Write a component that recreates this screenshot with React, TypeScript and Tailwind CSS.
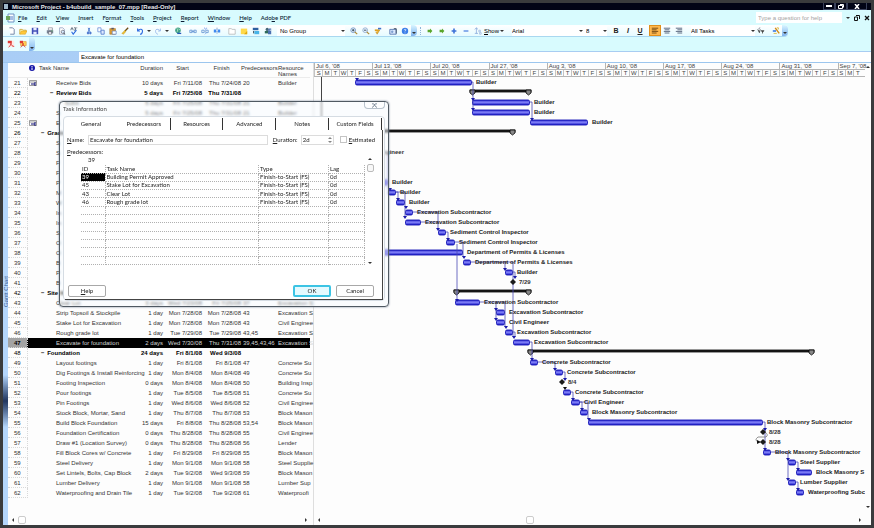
import React from 'react';
import clsx from 'clsx';

type Task = {
  id: number;
  name: string;
  dur?: string;
  start?: string;
  finish?: string;
  pred?: string;
  res?: string;
  summary?: boolean;
  flag?: boolean;
};

const TASKS: Task[] = [
  { id: 21, name: 'Receive Bids', dur: '10 days', start: 'Fri 7/11/08', finish: 'Thu 7/24/08', pred: '20', res: 'Builder', flag: true },
  { id: 22, name: 'Review Bids', dur: '5 days', start: 'Fri 7/25/08', finish: 'Thu 7/31/08', summary: true },
  { id: 23, name: 'Subs', dur: '5 days', start: 'Fri 7/25/08', finish: 'Thu 7/31/08', pred: '21', res: 'Builder' },
  { id: 24, name: 'S', dur: '5 days', start: 'Fri 7/25/08', finish: 'Thu 7/31/08', pred: '21', res: 'Builder' },
  { id: 25, name: 'E', flag: true },
  { id: 26, name: 'Grading', summary: true },
  { id: 27, name: 'S' },
  { id: 28, name: 'S' },
  { id: 29, name: 'F' },
  { id: 30, name: 'F' },
  { id: 31, name: 'P' },
  { id: 32, name: 'M' },
  { id: 33, name: 'W' },
  { id: 34, name: 'In' },
  { id: 35, name: 'In' },
  { id: 36, name: 'S' },
  { id: 37, name: 'O' },
  { id: 38, name: 'O' },
  { id: 39, name: 'B' },
  { id: 40, name: 'P' },
  { id: 41, name: 'B' },
  { id: 42, name: 'Site Work', summary: true },
  { id: 43, name: 'Clear Lot', dur: '3 days', start: 'Wed 7/23/08', finish: 'Fri 7/25/08', pred: '37', res: 'Excavation S' },
  { id: 44, name: 'Strip Topsoil & Stockpile', dur: '1 day', start: 'Mon 7/28/08', finish: 'Mon 7/28/08', pred: '43', res: 'Excavation S' },
  { id: 45, name: 'Stake Lot for Excavation', dur: '1 day', start: 'Mon 7/28/08', finish: 'Mon 7/28/08', pred: '43', res: 'Civil Enginee' },
  { id: 46, name: 'Rough grade lot', dur: '1 day', start: 'Tue 7/29/08', finish: 'Tue 7/29/08', pred: '43,45', res: 'Excavation S' },
  { id: 47, name: 'Excavate for foundation', dur: '2 days', start: 'Wed 7/30/08', finish: 'Thu 7/31/08', pred: '39,45,43,46', res: 'Excavation S' },
  { id: 48, name: 'Foundation', dur: '24 days', start: 'Fri 8/1/08', finish: 'Wed 9/3/08', summary: true },
  { id: 49, name: 'Layout footings', dur: '1 day', start: 'Fri 8/1/08', finish: 'Fri 8/1/08', pred: '47', res: 'Concrete Su' },
  { id: 50, name: 'Dig Footings & Install Reinforcing', dur: '1 day', start: 'Mon 8/4/08', finish: 'Mon 8/4/08', pred: '49', res: 'Concrete Su' },
  { id: 51, name: 'Footing Inspection', dur: '0 days', start: 'Mon 8/4/08', finish: 'Mon 8/4/08', pred: '50', res: 'Building Insp' },
  { id: 52, name: 'Pour footings', dur: '1 day', start: 'Tue 8/5/08', finish: 'Tue 8/5/08', pred: '51', res: 'Concrete Su' },
  { id: 53, name: 'Pin Footings', dur: '1 day', start: 'Wed 8/6/08', finish: 'Wed 8/6/08', pred: '52', res: 'Civil Enginee' },
  { id: 54, name: 'Stock Block, Mortar, Sand', dur: '1 day', start: 'Thu 8/7/08', finish: 'Thu 8/7/08', pred: '53', res: 'Block Mason' },
  { id: 55, name: 'Build Block Foundation', dur: '15 days', start: 'Fri 8/8/08', finish: 'Thu 8/28/08', pred: '53,54', res: 'Block Mason' },
  { id: 56, name: 'Foundation Certification', dur: '0 days', start: 'Thu 8/28/08', finish: 'Thu 8/28/08', pred: '55', res: 'Civil Enginee' },
  { id: 57, name: 'Draw #1 (Location Survey)', dur: '0 days', start: 'Thu 8/28/08', finish: 'Thu 8/28/08', pred: '56', res: 'Lender' },
  { id: 58, name: 'Fill Block Cores w/ Concrete', dur: '1 day', start: 'Fri 8/29/08', finish: 'Fri 8/29/08', pred: '55', res: 'Block Mason' },
  { id: 59, name: 'Steel Delivery', dur: '1 day', start: 'Mon 9/1/08', finish: 'Mon 9/1/08', pred: '58', res: 'Steel Supplie' },
  { id: 60, name: 'Set Lintels, Bolts, Cap Block', dur: '2 days', start: 'Tue 9/2/08', finish: 'Wed 9/3/08', pred: '59', res: 'Block Mason' },
  { id: 61, name: 'Lumber Delivery', dur: '1 day', start: 'Mon 9/1/08', finish: 'Mon 9/1/08', pred: '58', res: 'Lumber Sup' },
  { id: 62, name: 'Waterproofing and Drain Tile', dur: '1 day', start: 'Tue 9/2/08', finish: 'Tue 9/2/08', pred: '61', res: 'Waterproofi' },
];

// [task id, bar start, bar end, resource label]
const BARS: [number, number, number, string][] = [
  [21, 41, 158, 'Builder'],
  [23, 158, 216, 'Builder'],
  [24, 158, 216, 'Builder'],
  [25, 216, 274, 'Builder'],
  [31, 30, 74, 'Builder'],
  [32, 74, 82, 'Builder'],
  [33, 82, 91, 'Builder'],
  [34, 91, 99, 'Excavation Subcontractor'],
  [35, 91, 107, 'Excavation Subcontractor'],
  [36, 124, 132, 'Sediment Control Inspector'],
  [37, 132, 141, 'Sediment Control Inspector'],
  [38, 40, 149, 'Department of Permits & Licenses'],
  [39, 149, 157, 'Department of Permits & Licenses'],
  [40, 191, 199, 'Builder'],
  [43, 141, 166, 'Excavation Subcontractor'],
  [44, 182, 191, 'Excavation Subcontractor'],
  [45, 182, 191, 'Civil Engineer'],
  [46, 191, 199, 'Excavation Subcontractor'],
  [47, 199, 216, 'Excavation Subcontractor'],
  [49, 216, 224, 'Concrete Subcontractor'],
  [50, 241, 249, 'Concrete Subcontractor'],
  [52, 249, 257, 'Concrete Subcontractor'],
  [53, 257, 266, 'Civil Engineer'],
  [54, 266, 274, 'Block Masonry Subcontractor'],
  [55, 274, 449, 'Block Masonry Subcontractor'],
  [58, 449, 457, 'Block Masonry Subcontractor'],
  [59, 474, 482, 'Steel Supplier'],
  [60, 482, 498, 'Block Masonry S'],
  [61, 474, 482, 'Lumber Supplier'],
  [62, 482, 490, 'Waterproofing Subc'],
];

const SUMMARIES: [number, number, number][] = [
  [22, 156, 217],
  [26, 10, 201],
  [42, 140, 217],
  [48, 214, 500],
];

const MILESTONES: [number, number, string][] = [
  [41, 199, '7/29'],
  [51, 248, '8/4'],
  [56, 449, '8/28'],
  [57, 449, '8/28'],
];

// dependency lines, y measured from the top of the first row
const LINKS = [
  'M158 5H159V32', 'M216 25H218V42', 'M74 75V112', 'M82 115H84V122',
  'M82 115H91V140', 'M99 135H124V152', 'M107 145H124', 'M132 155H134V162',
  'M143 167V222', 'M141 165H149V180', 'M157 185H191V192', 'M191 185H199V260',
  'M199 195H201V200', 'M166 225H182V242', 'M182 225H191V250', 'M199 255H201V260',
  'M216 265H218V282', 'M224 285H241V292', 'M249 295H251V302', 'M257 315H259V322',
  'M266 325H268V332', 'M266 325H274V342', 'M449 345H451V372', 'M457 375H474V402',
  'M482 385H484V392', 'M482 405H484V412',
];

const ARROWS: [number, number][] = [
  [43, 2], [159, 22], [159, 32], [218, 42], [76, 112], [84, 122], [92, 130], [91, 140],
  [124, 152], [134, 162], [150, 180], [191, 192], [201, 200], [143, 223], [182, 232],
  [182, 242], [192, 250], [200, 260], [218, 282], [241, 292], [251, 302], [259, 322],
  [268, 332], [275, 342], [451, 352], [451, 372], [474, 382], [484, 392], [474, 402], [484, 412],
];

const WEEKS = ["Jul 6, '08", "Jul 13, '08", "Jul 20, '08", "Jul 27, '08", "Aug 3, '08", "Aug 10, '08", "Aug 17, '08", "Aug 24, '08", "Aug 31, '08", "Sep 7, '08"];
const DAYS = ['S', 'M', 'T', 'W', 'T', 'F', 'S'];
const DAYS_SHOWN = 66.3;

const rowTop = (id: number) => (id - 21) * 10;

const PREDECESSORS = [
  ['39', 'Building Permit Approved'],
  ['45', 'Stake Lot for Excavation'],
  ['43', 'Clear Lot'],
  ['46', 'Rough grade lot'],
];

const ICONS: Record<string, React.ReactNode> = {
  New: <path d="M3 1h4l2 2v6H4" fill="#fff" stroke="#5a6e96" />,
  Open: (
    <>
      <path d="M1 9V3h3l1 1h4v2" fill="#fff3b0" stroke="#c9a227" />
      <path d="M1 9l2-4h7L8 9z" fill="#ffc93c" stroke="#d99a10" strokeWidth=".6" />
    </>
  ),
  Save: (
    <>
      <path d="M1 1h8v8H1z" fill="#4350b8" />
      <path d="M3 1h4v3H3zM3 6h4v3H3z" fill="#e8edff" />
    </>
  ),
  Print: (
    <>
      <path d="M3 1h5v3H3z" fill="#fff" stroke="#667" strokeWidth=".7" />
      <path d="M1 4h8v4H1z" fill="#7b8797" />
      <path d="M3 6h4v3H3z" fill="#fff" stroke="#445" strokeWidth=".7" />
      <path d="M7 5h1" stroke="#3c3" />
    </>
  ),
  'Print Preview': (
    <>
      <path d="M2 1h4l2 2v6H2z" fill="#fff" stroke="#7a8bb0" strokeWidth=".8" />
      <circle cx="6" cy="6" r="2" fill="#d8ecff" stroke="#445" strokeWidth=".7" />
      <path d="M7 8l2 1" stroke="#333" />
    </>
  ),
  Spelling: (
    <>
      <path d="M1 4l1-3h1l1 3M5 1h2v3H5M8 1h1" fill="none" stroke="#345" strokeWidth=".9" />
      <path d="M2 6l2 3 4-5" fill="none" stroke="#2b6be0" strokeWidth="1.4" />
    </>
  ),
  Cut: (
    <>
      <path d="M4 1l2 5M6 1L4 6" stroke="#3469c8" />
      <path d="M3 6.500h1.500v2H3zM6 6.500h1.500v2H6z" fill="none" stroke="#1c4fc0" />
    </>
  ),
  Copy: (
    <>
      <path d="M1 1h4v5H1z" fill="#fff" stroke="#6c8fd8" />
      <path d="M5 4h4v5H5z" fill="#dfeaff" stroke="#4d77c9" />
    </>
  ),
  Paste: (
    <>
      <path d="M1 2h7v7H1z" fill="#e0a038" stroke="#a5701c" strokeWidth=".7" />
      <path d="M3 1h3v2H3z" fill="#556" />
      <path d="M4 5h5v4H4z" fill="#fff" stroke="#3b64b8" strokeWidth=".7" />
    </>
  ),
  'Format Painter': (
    <>
      <path d="M9 1L5 5" stroke="#6b4a12" strokeWidth="1.600" />
      <path d="M5 4l1 2-3 3-2-1z" fill="#f1c232" stroke="#b58a10" strokeWidth=".5" />
    </>
  ),
  Undo: <path d="M2 2v3h3M2 5c2-3 7-3 6 1-.4 2-2 3-3 3" fill="none" stroke="#2d6ae0" strokeWidth="1.400" />,
  Redo: <path d="M8 2v3H5M8 5C6 2 1 2 2 6c.4 2 2 3 3 3" fill="none" stroke="#9ab8ea" strokeWidth="1.100" />,
  'Insert Hyperlink': (
    <>
      <circle cx="5" cy="4" r="3.500" fill="#3f9f8a" />
      <path d="M3 2l2 1-1 3M6 2l2 2" stroke="#c6f3c8" fill="none" />
      <path d="M4 8h5" stroke="#2457b8" strokeWidth="1.600" />
    </>
  ),
  'Link Tasks': <path d="M1 4h3v3H1zM6 4h3v3H6zM3 5.500h4" fill="none" stroke="#5d8fd0" />,
  'Unlink Tasks': (
    <>
      <path d="M1 4h3v3H1zM6 4h3v3H6z" fill="none" stroke="#5d8fd0" />
      <path d="M4 1l2 2M6 8L5 9M7 1v1" stroke="#3d6fe0" />
    </>
  ),
  'Split Task': (
    <>
      <path d="M1 3h3v4H1zM6 3h3v4H6z" fill="#3f8af0" />
      <path d="M5 1v8" stroke="#2a4f9c" strokeDasharray="1 1" />
    </>
  ),
  'Task Information': <path d="M1 2h3l1 1h4v6H1z" fill="#fff" stroke="#a9a9a9" strokeWidth=".8" />,
  'Task Notes': (
    <>
      <path d="M1 2h8v7H1z" fill="#ffd94a" />
      <path d="M5 9l4-4v4z" fill="#e0a80e" />
    </>
  ),
  'Assign Resources': (
    <>
      <path d="M1 1h7v3H1z" fill="#2e5f9f" />
      <path d="M3 5h6v4H3z" fill="#48b4e8" />
      <path d="M2 5v3" stroke="#123" />
    </>
  ),
  Publish: (
    <>
      <circle cx="4" cy="3" r="2" fill="#467" />
      <path d="M1 5h5v3H1z" fill="#2f6b5a" />
      <path d="M6 2h3v7H5V6" fill="#4a6fb0" />
      <path d="M7 4h2" stroke="#fff" />
    </>
  ),
  'Zoom In': (
    <>
      <circle cx="4" cy="4" r="3" fill="#e5f3ff" stroke="#6f90c0" />
      <path d="M2.500 4h3M4 2.500v3" stroke="#234" />
      <path d="M6 6l3 3" stroke="#b08a30" strokeWidth="1.500" />
    </>
  ),
  'Zoom Out': (
    <>
      <circle cx="4" cy="4" r="3" fill="#e5f3ff" stroke="#8fa9cd" />
      <path d="M2.500 4h3" stroke="#234" />
      <path d="M6 6l3 3" stroke="#b08a30" strokeWidth="1.500" />
    </>
  ),
  'Go To Selected Task': (
    <>
      <path d="M1 3h6v2H1z" fill="#e0a020" />
      <path d="M5 1h4v2H5z" fill="#3d72c8" />
      <path d="M7 4L4 9 2 6" fill="#f0b53a" stroke="#a87a12" strokeWidth=".6" />
    </>
  ),
  'Copy Picture': (
    <>
      <path d="M1 3h8v6H1z" fill="#dbe9ff" stroke="#4a6ba8" />
      <path d="M6 2h3v6" stroke="#345" fill="none" />
      <circle cx="4" cy="6" r="1.500" fill="#7f9fd0" />
    </>
  ),
  Help: (
    <>
      <circle cx="5" cy="5" r="4" fill="#3a7de8" />
      <path d="M4 4c0-2 3-1 2 0L5 5.500M5 7v1" fill="none" stroke="#fff" />
    </>
  ),
  Outdent: <path d="M2 3.500h3V2l3 3-3 3V6.500H2z" fill="#59a52c" />,
  Indent: <path d="M2 3.500h3V2l3 3-3 3V6.500H2z" fill="#59a52c" />,
  'Show Subtasks': <path d="M4 2h2v2h2v2H6v2H4V6H2V4h2z" fill="#3d72d8" />,
  'Hide Subtasks': <path d="M2 4h6v2H2z" fill="#6f9be8" />,
  Outline: (
    <>
      <path d="M3 1v7M1 3l2-2 2 2M1 8h4" fill="none" stroke="#7fa3d8" strokeWidth=".9" />
      <path d="M6 4h2v2H6zM7 7h2v2H7z" fill="#fff" stroke="#7fa3d8" strokeWidth=".7" />
    </>
  ),
  'Align Left': <path d="M1 1.500h8M1 3.500h6M1 5.500h8M1 7.500h6" stroke="#5c3608" />,
  Center: <path d="M1 1.500h8M2 3.500h6M1 5.500h8M2 7.500h6" stroke="#3b4a66" />,
  'Align Right': <path d="M1 1.500h8M3 3.500h6M1 5.500h8M3 7.500h6" stroke="#3b4a66" />,
  AutoFilter: (
    <>
      <path d="M1 3l2 4 1-4" fill="none" stroke="#222" />
      <path d="M5 4h4v1L7.500 6.500V8H6.500V6.500L5 5z" fill="#444" />
      <path d="M2 2l2-1" stroke="#667" />
    </>
  ),
  'Gantt Wizard': (
    <>
      <path d="M1 4h4v2H1z" fill="#3a78e0" />
      <path d="M4 1l5 7" stroke="#d28b16" strokeWidth="1.800" />
      <path d="M6 1h2v2M2 8h4" stroke="#e0b020" fill="none" />
    </>
  ),
  'Convert to PDF': (
    <>
      <path d="M1 1h8v8H1z" fill="#ffe9e6" />
      <path d="M1 1h5v3H1z" fill="#e03a34" />
      <path d="M2 9c2-1 3-4 3-5 0 3 2 4 4 4" fill="none" stroke="#d11f1f" />
    </>
  ),
  'Convert to PDF and Email': (
    <>
      <path d="M2 2h7v5H2z" fill="#ffd35a" stroke="#e08a1a" strokeWidth=".7" />
      <path d="M1 1h4v3H1z" fill="#e03a34" />
      <path d="M2 9c2-1 3-3 3-5 0 3 2 4 3 5" fill="none" stroke="#d11f1f" />
    </>
  ),
};

function Caret({ dir = 'down' }: { dir?: 'up' | 'down' | 'left' | 'right' }) {
  const shape = { down: '0,1 4,1 2,3', up: '0,3 4,3 2,1', left: '3,0 3,4 1,2', right: '1,0 1,4 3,2' }[dir];
  return (
    <svg viewBox="0 0 4 4" className="pointer-events-none size-1 shrink-0 fill-[#333]">
      <polygon points={shape} />
    </svg>
  );
}

function IconButton({ name, active }: { name: string; active?: boolean }) {
  return (
    <button
      type="button"
      aria-label={name}
      className={clsx('flex h-[11px] w-3 shrink-0 items-center justify-center', active && 'border border-[#e0901c] bg-[#ffb84d]')}
    >
      <svg viewBox="0 0 10 10" className="size-2">{ICONS[name]}</svg>
    </button>
  );
}

function IconGroup({ names }: { names: string[] }) {
  return (
    <div className="flex shrink-0">
      {names.map((n) => <IconButton key={n} name={n} />)}
    </div>
  );
}

function Combo({ label, value, className }: { label: string; value: string; className: string }) {
  return (
    <div className={clsx('flex h-[10px] shrink-0 items-center bg-white', className)}>
      <select aria-label={label} defaultValue={value} className="h-full min-w-0 flex-1 appearance-none bg-transparent text-[6px] leading-none outline-none">
        <option>{value}</option>
      </select>
      <Caret />
    </div>
  );
}

function ToolbarEnd() {
  return (
    <button type="button" aria-label="Toolbar options" className="flex h-full w-[6px] shrink-0 items-end justify-center rounded-r bg-linear-to-b from-[#d9f6ff] to-[#7fb2ee] pb-px">
      <Caret />
    </button>
  );
}

function TitleBar() {
  return (
    <header className="flex h-[7px] items-center justify-between overflow-hidden bg-[#020416] pr-1 text-[6px] leading-none font-bold text-[#e8e8e8]">
      <div className="flex items-center gap-1 pl-px">
        <span className="h-[5px] w-1 bg-[#9fb6c9]" />
        <h1>Microsoft Project - b4ubuild_sample_07.mpp [Read-Only]</h1>
      </div>
      <div className="flex">
        <button type="button" aria-label="Minimize" className="flex h-[7px] w-3 items-center justify-center border border-t-0 border-[#39405a]">
          <svg viewBox="0 0 6 4" className="h-1 w-[6px]"><path d="M0 1h6v2H0z" fill="#fff" /></svg>
        </button>
        <button type="button" aria-label="Restore" className="flex h-[7px] w-3 items-center justify-center border border-t-0 border-[#39405a]">
          <svg viewBox="0 0 6 5" className="h-[5px] w-[6px]"><path d="M2 .5h3.500v3M.5 1.500h4v3h-4z" fill="none" stroke="#fff" /></svg>
        </button>
        <button type="button" aria-label="Close" className="flex h-[7px] w-5 items-center justify-center border border-t-0 border-[#39405a]">
          <svg viewBox="0 0 6 5" className="h-[5px] w-[6px]"><path d="M1 0l4 5M5 0L1 5" stroke="#fff" strokeWidth="1.500" /></svg>
        </button>
      </div>
    </header>
  );
}

const MENUS: [string, string, string][] = [
  ['', 'F', 'ile'], ['', 'E', 'dit'], ['', 'V', 'iew'], ['', 'I', 'nsert'], ['F', 'o', 'rmat'], ['', 'T', 'ools'],
  ['', 'P', 'roject'], ['', 'R', 'eport'], ['', 'W', 'indow'], ['', 'H', 'elp'], ['Ado', 'b', 'e PDF'],
];

function MenuBar() {
  return (
    <nav className="flex h-[15px] items-center justify-between bg-[#d8fbfe] pl-[2px] text-[6px] leading-none text-[#0b1c33]">
      <div className="flex items-center gap-[3px]">
        <svg viewBox="0 0 10 10" className="size-[10px]">
          <path d="M3 1h6v8H3z" fill="#fff" stroke="#6d92c4" />
          <path d="M1 3h4v4H1z" fill="#6aa35c" />
          <path d="M5 4h3M5 6h3" stroke="#4c7cc9" />
        </svg>
        <div className="flex gap-[9px] font-['Lato',sans-serif] font-medium">
          {MENUS.map(([a, key, b]) => (
            <button key={key + b} type="button">
              {a}<span className="underline">{key}</span>{b}
            </button>
          ))}
        </div>
      </div>
      <div className="flex items-center gap-1 pr-px">
        <input aria-label="Type a question for help" placeholder="Type a question for help" className="h-[11px] w-[86px] bg-white px-[2px] text-[6px] outline-none placeholder:text-[#a3a3a3]" />
        <Caret />
        <button type="button" aria-label="Restore window">
          <svg viewBox="0 0 6 6" className="size-[6px]"><path d="M2 .5h3.500V4M.5 2h3v3.500h-3z" fill="none" stroke="#111" /></svg>
        </button>
        <button type="button" aria-label="Close window">
          <svg viewBox="0 0 6 6" className="size-[6px]"><path d="M1 1l4 4M5 1L1 5" stroke="#111" strokeWidth="1.300" /></svg>
        </button>
      </div>
    </nav>
  );
}

function Toolbars() {
  return (
    <div className="bg-[#d8fbfe]">
      <div className="flex h-3 w-fit items-center rounded-r border-b border-[#a9d8f0] bg-linear-to-b from-white to-[#e6fbff] pl-[2px]">
        <div className="flex items-center gap-[3px]">
          <IconGroup names={['New', 'Open', 'Save']} />
          <IconGroup names={['Print', 'Print Preview', 'Spelling']} />
          <IconGroup names={['Cut', 'Copy', 'Paste', 'Format Painter']} />
          <div className="flex items-center gap-px">
            <IconButton name="Undo" />
            <Caret />
            <IconButton name="Redo" />
            <Caret />
          </div>
          <IconGroup names={['Insert Hyperlink']} />
          <IconGroup names={['Link Tasks', 'Unlink Tasks', 'Split Task']} />
          <IconGroup names={['Task Information', 'Task Notes', 'Assign Resources', 'Publish']} />
          <Combo label="Group by" value="No Group" className="w-[68px] pl-[3px]" />
          <IconGroup names={['Zoom In', 'Zoom Out', 'Go To Selected Task']} />
          <IconGroup names={['Copy Picture', 'Help']} />
        </div>
        <ToolbarEnd />
        <div className="mx-[3px] h-2 border-l border-dotted border-[#8fb4d6]" />
        <IconGroup names={['Outdent', 'Indent', 'Show Subtasks', 'Hide Subtasks', 'Outline']} />
        <button type="button" className="flex w-[22px] shrink-0 items-center gap-px text-[6px] leading-none">
          <span><span className="underline">S</span>how</span>
          <Caret />
        </button>
        <Combo label="Font" value="Arial" className="ml-[6px] w-[71px]" />
        <Combo label="Font size" value="8" className="w-6 pl-[3px]" />
        <div className="mx-[3px] flex text-[7px] leading-none text-[#222]">
          <button type="button" className="w-3 font-bold">B</button>
          <button type="button" className="w-3 font-bold italic">I</button>
          <button type="button" className="w-3 font-bold underline">U</button>
        </div>
        <IconButton name="Align Left" active />
        <IconGroup names={['Center', 'Align Right']} />
        <Combo label="Filter" value="All Tasks" className="ml-[6px] w-[64px]" />
        <IconButton name="AutoFilter" />
        <div className="ml-[3px] flex h-full items-center">
          <IconButton name="Gantt Wizard" />
          <ToolbarEnd />
        </div>
      </div>
      <div className="flex h-[14px] w-fit items-center rounded-r bg-[#e8fdff] pl-[2px]">
        <IconGroup names={['Convert to PDF', 'Convert to PDF and Email']} />
        <ToolbarEnd />
      </div>
      <div className="h-px bg-[#a8cdf2]" />
    </div>
  );
}

function IndicatorIcon() {
  return (
    <svg viewBox="0 0 8 8" className="ml-px size-2">
      <path d="M.5 1.500h7v5h-7zM.5 3h7" fill="#fff" stroke="#777" strokeWidth=".7" />
      <path d="M2 5h4M6 3v4" stroke="#0a0a70" />
    </svg>
  );
}

function TaskTable() {
  return (
    <table className="w-[302px] table-fixed border-collapse text-[6px] leading-none whitespace-nowrap text-[#333]">
      <colgroup>
        <col className="w-[19px]" /><col className="w-[12px]" /><col className="w-[97px]" /><col className="w-[27px]" />
        <col className="w-[39px]" /><col className="w-[39px]" /><col className="w-[37px]" /><col className="w-[32px]" />
      </colgroup>
      <thead>
        <tr className="h-[14px] border-b border-[#ececec] align-top [&>th]:p-0 [&>th]:pt-[2px] [&>th]:font-normal">
          <th />
          <th>
            <svg viewBox="0 0 6 6" className="ml-[2px] size-[6px]">
              <circle cx="3" cy="3" r="3" fill="#1717a8" />
              <path d="M3 1v1M3 2.500v2.500" stroke="#fff" />
            </svg>
          </th>
          <th className="text-left">Task Name</th>
          <th className="text-right">Duration</th>
          <th>Start</th>
          <th>Finish</th>
          <th className="text-left">Predecessors</th>
          <th className="text-left">Resource<br />Names</th>
        </tr>
      </thead>
      <tbody>
        {TASKS.map((t) => (
          <tr
            key={t.id}
            className={clsx(
              'h-[10px] [&>td]:p-0',
              t.summary && 'font-bold text-black',
              t.id === 47 && 'bg-black text-[#d5d5d5]'
            )}
          >
            <th
              scope="row"
              className={clsx('border-r border-b border-dotted border-[#d8d8d8] p-0', t.id === 47 ? 'bg-[#a3a3a3] font-bold text-black' : 'font-normal')}
            >
              {t.id}
            </th>
            <td>{t.flag && <IndicatorIcon />}</td>
            <td>
              {t.summary ? (
                <span className={t.id === 22 ? 'pl-[11px]' : 'pl-[2px]'}>− <span className="pl-px">{t.name}</span></span>
              ) : (
                <span className={t.id === 23 ? 'pl-[26px]' : 'pl-[17px]'}>{t.name}</span>
              )}
            </td>
            <td className="text-right">{t.dur}</td>
            <td className="text-right">{t.start}</td>
            <td className="text-right">{t.finish}</td>
            <td><span className="pl-[2px]">{t.pred}</span></td>
            <td>{t.res}</td>
          </tr>
        ))}
      </tbody>
    </table>
  );
}

function Timescale() {
  const dayWidth = `${100 / DAYS_SHOWN}%`;
  const weekWidth = `${700 / DAYS_SHOWN}%`;
  return (
    <div className="h-[14px] text-[6px] leading-none text-[#444]">
      <div className="flex h-[7px] border-b border-[#b5b5b5]">
        {WEEKS.map((w, i) => (
          <div
            key={w}
            className={clsx('border-l border-[#b5b5b5] pl-px whitespace-nowrap', i === WEEKS.length - 1 ? 'min-w-0 flex-1' : 'shrink-0')}
            style={i === WEEKS.length - 1 ? undefined : { width: weekWidth }}
          >
            {w}
          </div>
        ))}
      </div>
      <div className="flex h-[7px] overflow-hidden border-b border-[#b5b5b5]">
        {WEEKS.flatMap((w) => DAYS.map((d, i) => ({ key: w + i, d })))
          .slice(0, Math.floor(DAYS_SHOWN))
          .map(({ key, d }) => (
            <div key={key} className="shrink-0 border-l border-[#c4c4c4] text-center" style={{ width: dayWidth }}>{d}</div>
          ))}
      </div>
    </div>
  );
}

function GanttChart() {
  return (
    <svg className="block h-[436px] w-full font-['Liberation_Sans',Arial,sans-serif] text-[6px] font-bold">
      <defs>
        <linearGradient id="bar" x1="0" y1="0" x2="0" y2="1">
          <stop offset="0" stopColor="#2424c8" />
          <stop offset=".45" stopColor="#8585fa" />
          <stop offset="1" stopColor="#1616c4" />
        </linearGradient>
      </defs>
      <path d="M7.500 0V100" stroke="#444" />
      {SUMMARIES.map(([id, x1, x2]) => {
        const y = rowTop(id);
        return (
          <g key={id} stroke="#000" strokeWidth=".8">
            <rect x={x1} y={y + 3} width={x2 - x1} height="2" fill="#222" />
            <path d={`M${x1} ${y + 3}h5v3l-2.500 2-2.500-2zM${x2 - 5} ${y + 3}h5v3l-2.500 2-2.500-2z`} fill="#888" />
          </g>
        );
      })}
      {BARS.map(([id, x1, x2]) => (
        <rect key={id} x={x1 + 0.5} y={rowTop(id) + 3} width={x2 - x1 - 1} height="5" rx="1.500" fill="url(#bar)" stroke="#1414b4" strokeWidth=".9" />
      ))}
      <path d={LINKS.join('')} fill="none" stroke="#4a4ab4" strokeWidth=".8" />
      <path d={ARROWS.map(([x, y]) => `M${x - 2} ${y - 1}h4l-2 3z`).join('')} fill="#1a1aa8" />
      <path d="M451 355q4 3 1 5h-8q-4 3 0 5" fill="none" stroke="#777" strokeWidth=".8" />
      <path d="M443 363l4 2-4 2zM249 310h4l-2 3z" fill="#111" />
      {MILESTONES.map(([id, x, label]) => {
        const y = rowTop(id) + 5;
        return (
          <g key={id}>
            <path d={`M${x} ${y - 3}l3 3-3 3-3-3z`} fill="#1b1b1b" />
            <text x={x + 6} y={y + 2} fill="#333">{label}</text>
          </g>
        );
      })}
      <text x="50" y="77" fill="#333">Civil Engineer</text>
      {BARS.map(([id, , x2, label]) => (
        <text key={id} x={x2 + 4} y={rowTop(id) + 7} fill="#222">{label}</text>
      ))}
    </svg>
  );
}

function TaskDialog() {
  const tabs = ['General', 'Predecessors', 'Resources', 'Advanced', 'Notes', 'Custom Fields'];
  return (
    <section
      role="dialog"
      aria-label="Task Information"
      className="absolute top-[38px] left-[51px] w-[330px] rounded border border-[#4f5962] bg-[#f4faff]/40 px-[3px] pb-[5px] font-['Lato',sans-serif] text-[6px] leading-none text-[#222] shadow-[0_0_2px_#64748b] backdrop-blur-[1px]"
    >
      <header className="flex h-[14px] items-start justify-between">
        <h2 className="pt-1 text-[6px] text-[#444]">Task Information</h2>
        <button type="button" aria-label="Close" className="flex h-[7px] w-[21px] items-center justify-center rounded-b border border-t-0 border-[#b8c2cc] bg-white/60">
          <svg viewBox="0 0 8 6" className="h-[5px] w-[7px]"><path d="M1 1h2l3 4h1M7 1H5L2 5H1" fill="none" stroke="#5b6d80" strokeWidth=".9" /></svg>
        </button>
      </header>
      <div className="rounded-sm border border-[#d5dce3] bg-white px-px pt-px">
        <div role="tablist" className="flex h-3 pr-px">
          {tabs.map((t) => (
            <button
              key={t}
              type="button"
              role="tab"
              aria-selected={t === 'Predecessors'}
              className={clsx('flex-1 border-r', t === 'General' ? 'border-transparent' : 'border-[#333]')}
            >
              {t}
            </button>
          ))}
        </div>
        <div className="border-r border-b border-[#444] pb-[2px] pl-[2px]">
          <div className="flex h-[19px] items-center">
            <label htmlFor="task-name" className="w-[21px]"><span className="underline">N</span>ame:</label>
            <input id="task-name" defaultValue="Excavate for foundation" className="h-[10px] min-w-0 flex-1 border border-[#dcdcdc] px-px outline-none" />
            <label htmlFor="task-duration" className="ml-[5px] w-[28px]"><span className="underline">D</span>uration:</label>
            <div className="flex h-[10px] w-[33px] items-center border border-[#dcdcdc] pr-px">
              <input id="task-duration" defaultValue="2d" className="w-full min-w-0 px-px outline-none" />
              <div className="flex flex-col opacity-60"><Caret dir="up" /><Caret /></div>
            </div>
            <label className="mr-[7px] ml-[6px] flex items-center gap-[2px]">
              <input type="checkbox" className="size-[7px] appearance-none border border-[#c4c4c4] bg-white" />
              <span><span className="underline">E</span>stimated</span>
            </label>
          </div>
          <h3><span className="underline">P</span>redecessors:</h3>
          <div className="flex gap-px pt-[2px] pr-2 pl-[14px]">
            <div className="flex-1">
              <div className="h-2 pl-[7px]">39</div>
              <table className="h-[100px] w-full table-fixed border-collapse text-left">
                <colgroup>
                  <col className="w-[24px]" /><col /><col className="w-[70px]" /><col className="w-[36px]" />
                </colgroup>
                <thead>
                  <tr className="h-2 [&>th]:border-r [&>th]:border-b [&>th]:border-dotted [&>th]:border-[#b0b0b0] [&>th]:p-0 [&>th]:pl-px [&>th]:font-normal">
                    <th>ID</th><th>Task Name</th><th>Type</th><th>Lag</th>
                  </tr>
                </thead>
                <tbody>
                  {Array.from({ length: 11 }, (_, i) => {
                    const p = PREDECESSORS[i];
                    return (
                      <tr key={i} className="h-2 [&>td]:border-r [&>td]:border-b [&>td]:border-dotted [&>td]:border-[#b0b0b0] [&>td]:p-0 [&>td]:pl-px">
                        <td className={clsx(i === 0 && 'bg-black text-white')}>{p?.[0]}</td>
                        <td>{p?.[1]}</td>
                        <td>{p && 'Finish-to-Start (FS)'}</td>
                        <td>{p && '0d'}</td>
                      </tr>
                    );
                  })}
                </tbody>
              </table>
            </div>
            <div className="flex w-2 flex-col items-center">
              <Caret dir="up" />
              <div className="mt-[3px] mb-auto h-2 w-[7px] rounded-xs border border-[#bbb] bg-[#f8f8f8]" />
              <Caret />
            </div>
          </div>
          <div className="flex items-center pt-5 pr-2 pl-px">
            <button type="button" className="h-3 w-[38px] rounded-xs border border-[#a8a8a8]"><span className="underline">H</span>elp</button>
            <button type="button" className="mr-[5px] ml-auto h-3 w-[38px] rounded-xs border-2 border-[#3cc4e4] bg-[#e4faff]">OK</button>
            <button type="button" className="h-3 w-[38px] rounded-xs border border-[#a8a8a8]">Cancel</button>
          </div>
        </div>
      </div>
    </section>
  );
}

export default function App() {
  return (
    <div className="flex min-h-screen flex-col border-[3px] border-[#3a3b3d] bg-[#fdfdfd] font-['Liberation_Sans',Arial,sans-serif] text-black">
      <TitleBar />
      <MenuBar />
      <Toolbars />
      <div className="flex h-[11px] border-b border-[#9cc6ee] bg-linear-to-r from-[#a9cdf6] to-[#b9daf8]">
        <input aria-label="Entry" defaultValue="Excavate for foundation" className="ml-[76px] flex-1 bg-white px-[2px] text-[6px] leading-none outline-none" />
      </div>
      <main className="flex flex-1">
        <aside className="flex w-[5px] shrink-0 flex-col items-center overflow-hidden bg-[#b4d6fc]">
          <span className="mt-[213px] rotate-180 text-[6px] leading-none whitespace-nowrap text-[#345a92] [writing-mode:vertical-rl]">Gantt Chart</span>
          <div className="mt-[68px] h-[52px] w-full bg-linear-to-b from-[#b4d6fc] via-[#22365e] to-[#b4d6fc]" />
        </aside>
        <div className="relative flex min-w-0 flex-1 bg-[#fdfdfd]">
          <div className="flex w-[306px] shrink-0 flex-col justify-between border-r border-[#dedede]">
            <TaskTable />
            <div className="flex h-[10px] items-center pr-[5px] pl-[3px]">
              <Caret dir="left" />
              <div className="mr-auto ml-[3px] size-2 rounded-xs border border-[#ccc] bg-white" />
              <Caret dir="right" />
            </div>
          </div>
          <div className="flex min-w-0 flex-1 flex-col justify-between">
            <div>
              <Timescale />
              <GanttChart />
            </div>
            <div className="flex h-[10px] items-center px-[3px]">
              <Caret dir="left" />
              <div className="mr-auto ml-[205px] size-2 rounded-xs border border-[#ccc] bg-white" />
              <Caret dir="right" />
            </div>
          </div>
          <div className="flex w-[6px] shrink-0 flex-col items-center justify-between pt-[2px] pb-[16px]">
            <Caret dir="up" />
            <Caret />
          </div>
          <TaskDialog />
        </div>
      </main>
    </div>
  );
}
